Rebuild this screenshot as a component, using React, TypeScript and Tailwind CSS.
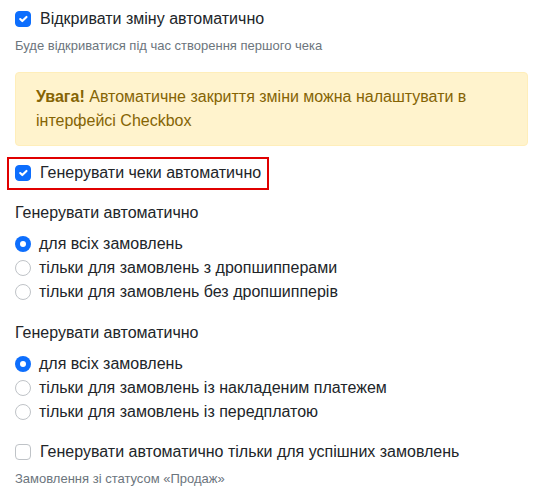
import React from 'react';

const Check: React.FC<{ checked?: boolean }> = ({ checked }) => (
    <span
        className={
            'flex h-4 w-4 shrink-0 items-center justify-center rounded-[4px] border ' +
            (checked ? 'border-[#0d6efd] bg-[#0d6efd]' : 'border-[#bfc3c7] bg-white')
        }
    >
        {checked && (
            <svg viewBox="0 0 20 20" className="h-4 w-4">
                <path d="M6 10l3 3l6-6" fill="none" stroke="#fff" strokeWidth="3" strokeLinecap="round" strokeLinejoin="round" />
            </svg>
        )}
    </span>
);

const Radio: React.FC<{ checked?: boolean; label: string }> = ({ checked, label }) => (
    <div className="flex h-6 items-center gap-[8px]">
        {checked ? (
            <span className="flex h-4 w-4 shrink-0 items-center justify-center rounded-full bg-[#0d6efd]">
                <span className="h-[6px] w-[6px] rounded-full bg-white" />
            </span>
        ) : (
            <span className="h-4 w-4 shrink-0 rounded-full border border-[#bfc3c7] bg-white" />
        )}
        <span>{label}</span>
    </div>
);

export default function App() {
    return (
        <div className="min-h-[500px] bg-white px-[15px] pt-[7px] text-[16px] leading-6 text-[#212529]" style={{ fontFamily: '"Liberation Sans", Arial, sans-serif' }}>
            <div className="flex h-6 items-center gap-[9px]">
                <Check checked />
                <span>Відкривати зміну автоматично</span>
            </div>
            <div className="mt-[5px] text-[13px] leading-5 text-[#6c757d]">Буде відкриватися під час створення першого чека</div>

            <div className="mt-4 rounded-[4px] border border-[#ffeeba] bg-[#fff3cd] px-5 py-3 text-[#856404]">
                <span className="font-bold">Увага!</span>
                <span> Автоматичне закриття зміни можна налаштувати в інтерфейсі Checkbox</span>
            </div>

            <div className="-ml-2 mt-[11px] flex w-[262px] items-center gap-[9px] border-2 border-[#e00000] pb-[3px] pl-[6px] pt-[2px]">
                <Check checked />
                <span>Генерувати чеки автоматично</span>
            </div>

            <div className="mt-[11px] mb-[7px]">Генерувати автоматично</div>
            <Radio checked label="для всіх замовлень" />
            <Radio label="тільки для замовлень з дропшипперами" />
            <Radio label="тільки для замовлень без дропшипперів" />

            <div className="mt-[17px] mb-[7px]">Генерувати автоматично</div>
            <Radio checked label="для всіх замовлень" />
            <Radio label="тільки для замовлень із накладеним платежем" />
            <Radio label="тільки для замовлень із передплатою" />

            <div className="mt-4 flex h-6 items-center gap-[9px]">
                <Check />
                <span>Генерувати автоматично тільки для успішних замовлень</span>
            </div>
            <div className="mt-[5px] text-[13px] leading-5 text-[#6c757d]">Замовлення зі статусом «Продаж»</div>
        </div>
    );
}
